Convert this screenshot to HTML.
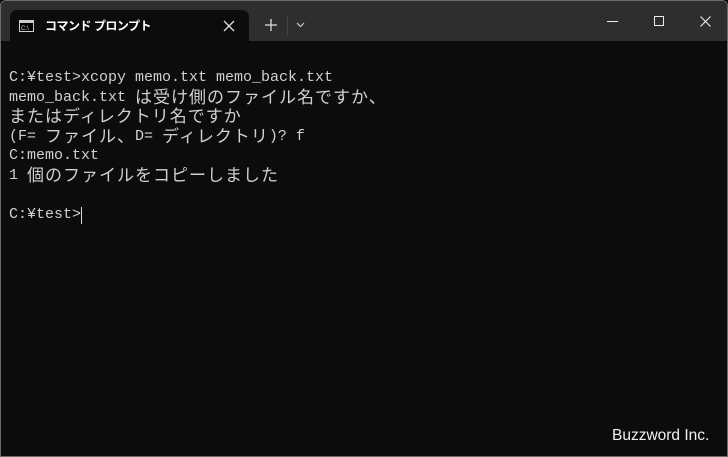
<!DOCTYPE html>
<html><head><meta charset="utf-8"><style>
*{margin:0;padding:0;box-sizing:border-box}
html,body{width:728px;height:457px;overflow:hidden;background:#0c0c0c}
.win{position:absolute;left:0;top:0;width:728px;height:457px;border:1px solid #6a6a6a;border-radius:6px 6px 0 0;background:#0c0c0c;overflow:hidden}
.bar{position:absolute;left:0;top:0;width:728px;height:40px;background:#2e2e2e}
.tab{position:absolute;left:9px;top:9px;width:239px;height:32px;background:#0c0c0c;border-radius:7px 7px 0 0}
.tt{position:absolute;left:35px;top:7px;color:#fff;font:bold 12px "Liberation Sans","Noto Sans CJK JP",sans-serif;letter-spacing:-0.5px}
.term{position:absolute;left:8px;top:67px;color:#d0d0d0;font:15px "Liberation Mono","Noto Sans CJK JP",monospace}
.term div{height:19.5px;line-height:19.5px;white-space:pre}
.term span{display:inline-block;vertical-align:top;height:19.5px;line-height:19.5px}
.j{font-size:17px;letter-spacing:1px;font-family:"Noto Sans CJK JP",sans-serif;position:relative;top:-2px}
.wm{position:absolute;left:611px;top:426px;color:#f0f0f0;font:15.5px "Liberation Sans",sans-serif}
</style></head><body><div class="win">
<div class="bar">
<div class="tab">
<svg style="position:absolute;left:9px;top:10px" width="15" height="12"><rect x="0.5" y="0.5" width="14" height="11" fill="#000" stroke="#ccc"/><rect x="1" y="1" width="13" height="2" fill="#ccc"/><text x="2" y="10" fill="#ddd" font-size="6" font-family="Liberation Sans">C:\_</text></svg>
<div class="tt">コマンド プロンプト</div>
<svg style="position:absolute;left:213px;top:10px" width="12" height="12"><path d="M1 1L11 11M11 1L1 11" stroke="#ddd" stroke-width="1.3"/></svg>
</div>
<svg style="position:absolute;left:264px;top:18px" width="12" height="12"><path d="M6 0V12M0 6H12" stroke="#ddd" stroke-width="1.3"/></svg>
<div style="position:absolute;left:286px;top:15px;width:1px;height:20px;background:#444"></div>
<svg style="position:absolute;left:295px;top:21px" width="9" height="6"><path d="M1 1L4.5 4.5L8 1" stroke="#ccc" stroke-width="1.2" fill="none"/></svg>
<div style="position:absolute;left:606px;top:20px;width:11px;height:1px;background:#eee"></div>
<div style="position:absolute;left:653px;top:15px;width:10px;height:10px;border:1px solid #eee"></div>
<svg style="position:absolute;left:699px;top:15px" width="11" height="11"><path d="M0.5 0.5L10.5 10.5M10.5 0.5L0.5 10.5" stroke="#eee" stroke-width="1.1"/></svg>
</div>
<div class="term"><div><span>C:¥test&gt;xcopy memo.txt memo_back.txt</span></div><div><span>memo_back.txt </span><span class="j">は受け側のファイル名ですか、</span></div><div><span class="j">またはディレクトリ名ですか</span></div><div><span>(F= </span><span class="j">ファイル、</span><span>D= </span><span class="j">ディレクトリ</span><span>)? f</span></div><div><span>C:memo.txt</span></div><div><span>1 </span><span class="j">個のファイルをコピーしました</span></div><div></div><div><span>C:¥test&gt;</span><span style="width:1px;height:17px;background:#ddd;margin-top:2px"></span></div></div>
<div class="wm">Buzzword Inc.</div>
</div></body></html>
